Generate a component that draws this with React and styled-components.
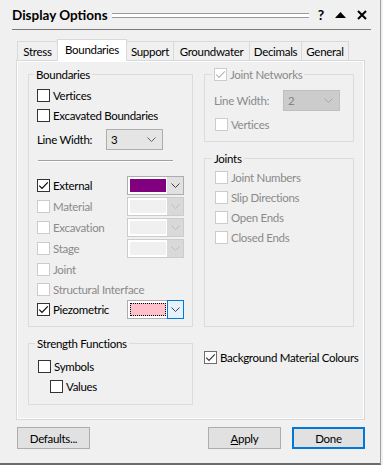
import React from "react";
import styled, { createGlobalStyle } from "styled-components";

const GlobalStyle = createGlobalStyle`
  html, body {
    margin: 0;
    padding: 0;
    background: #f0f0f0;
  }
  body {
    font-family: Lato, "Noto Sans", sans-serif;
    font-size: 11.5px;
    letter-spacing: -0.3px;
    color: #000;
  }
`;

const GREY_TEXT = "#8a8a8a";

function Chevron({ color = "#404040" }) {
  return (
    <svg width="9" height="5" viewBox="0 0 9 5">
      <path d="M0.5 0.5 L4.5 4.5 L8.5 0.5" fill="none" stroke={color} strokeWidth="1" />
    </svg>
  );
}

function CheckBox({ label, checked, disabled, soft }) {
  const stroke = disabled ? "#b5b5b5" : soft ? "#333" : "#000";
  return (
    <CheckLabel $disabled={disabled}>
      <Box $disabled={disabled} $soft={soft}>
        {checked && (
          <svg width="11" height="11" viewBox="0 0 11 11">
            <path d="M1.2 5.6 L4 8.4 L9.8 2.4" fill="none" stroke={stroke} strokeWidth="1.1" />
          </svg>
        )}
      </Box>
      {label}
    </CheckLabel>
  );
}

function ColorCombo({ color, disabled, focused }) {
  return (
    <Combo $disabled={disabled}>
      <Swatch $color={color} $focused={focused} />
      <DropButton $disabled={disabled} $focused={focused}>
        <Chevron color={disabled ? "#bdbdbd" : "#404040"} />
      </DropButton>
    </Combo>
  );
}

function LineWidth({ value, disabled }) {
  return (
    <FieldRow>
      <FieldLabel $disabled={disabled}>Line Width:</FieldLabel>
      <Select $disabled={disabled}>
        <span>{value}</span>
        <Chevron color={disabled ? "#a8a8a8" : "#606060"} />
      </Select>
    </FieldRow>
  );
}

const boundaryRows = [
  { label: "External", checked: true, color: "#800080" },
  { label: "Material", disabled: true, color: "#f0f0f0" },
  { label: "Excavation", disabled: true, color: "#f0f0f0" },
  { label: "Stage", disabled: true, color: "#f0f0f0" },
  { label: "Joint", disabled: true },
  { label: "Structural Interface", disabled: true },
  { label: "Piezometric", checked: true, color: "#ffc0cb", focused: true },
];

const tabs = [
  { name: "Stress", w: 41 },
  { name: "Boundaries", w: 70, active: true },
  { name: "Support", w: 48 },
  { name: "Groundwater", w: 77 },
  { name: "Decimals", w: 53 },
  { name: "General", w: 48 },
];

export default function App() {
  return (
    <>
      <GlobalStyle />
      <Dialog>
        <TitleBar>
          <Title>Display Options</Title>
          <Grip />
          <TitleIcons>
            <Help>?</Help>
            <svg width="11" height="6" viewBox="0 0 11 6">
              <path d="M0 6 L5.5 0 L11 6 Z" fill="#000" />
            </svg>
            <svg width="10" height="10" viewBox="0 0 10 10">
              <path d="M1 1 L9 9 M9 1 L1 9" stroke="#000" strokeWidth="2" />
            </svg>
          </TitleIcons>
        </TitleBar>

        <TabStrip>
          {tabs.map((t) => (
            <Tab key={t.name} $active={t.active} $w={t.w}>
              {t.name}
            </Tab>
          ))}
        </TabStrip>

        <Panel>
          <GroupBox $pad={8}>
            <Caption>Boundaries</Caption>
            <Stack $top={3}>
              <Row>
                <CheckBox label="Vertices" />
              </Row>
              <Row>
                <CheckBox label="Excavated Boundaries" />
              </Row>
            </Stack>
            <Spaced $top={4}>
              <LineWidth value="3" />
            </Spaced>
            <Separator />
            <Stack $top={13}>
              {boundaryRows.map((r) => (
                <Row key={r.label} $h={r.color ? 21 : 20}>
                  <CheckBox label={r.label} checked={r.checked} disabled={r.disabled} />
                  {r.color && (
                    <ColorCombo color={r.color} disabled={r.disabled} focused={r.focused} />
                  )}
                </Row>
              ))}
            </Stack>
          </GroupBox>

          <Column>
            <GroupBox $pad={10} $bottom={7}>
              <Caption>
                <CheckBox label="Joint Networks" checked disabled />
              </Caption>
              <Spaced $top={8} $shift={-1}>
                <LineWidth value="2" disabled />
              </Spaced>
              <Stack $top={3}>
                <Row>
                  <CheckBox label="Vertices" disabled />
                </Row>
              </Stack>
            </GroupBox>

            <GroupBox $pad={10} $grow>
              <Caption>Joints</Caption>
              <Stack $top={1}>
                <Row>
                  <CheckBox label="Joint Numbers" disabled />
                </Row>
                <Row>
                  <CheckBox label="Slip Directions" disabled />
                </Row>
                <Row>
                  <CheckBox label="Open Ends" disabled />
                </Row>
                <Row>
                  <CheckBox label="Closed Ends" disabled />
                </Row>
              </Stack>
            </GroupBox>
          </Column>

          <GroupBox $pad={9} $bottom={8}>
            <Caption>Strength Functions</Caption>
            <Stack $top={5}>
              <Row>
                <CheckBox label="Symbols" />
              </Row>
              <Row $indent={12}>
                <CheckBox label="Values" />
              </Row>
            </Stack>
          </GroupBox>

          <Stack $top={4}>
            <Row>
              <CheckBox label="Background Material Colours" checked soft />
            </Row>
          </Stack>
        </Panel>

        <ButtonBar>
          <Button>Defaults...</Button>
          <Spacer />
          <Button>
            <u>A</u>pply
          </Button>
          <Button $default>Done</Button>
        </ButtonBar>
      </Dialog>
    </>
  );
}

const Dialog = styled.div`
  box-sizing: border-box;
  width: 381px;
  height: 465px;
  padding: 0 15px 0 16px;
  border-right: 1px solid #a0a0a0;
  border-bottom: 2px solid #6b6b6b;
  background: #f0f0f0;
`;

const TitleBar = styled.div`
  display: flex;
  align-items: center;
  height: 16px;
  margin: 0 -6px 0 -4px;
  padding: 7px 0 6px;
  border-bottom: 1px solid #7a7a7a;
`;

const Title = styled.div`
  font-size: 13.5px;
  font-weight: 700;
  letter-spacing: 0;
  line-height: 16px;
  white-space: nowrap;
`;

const Grip = styled.div`
  flex: 1;
  height: 3px;
  margin: 0 9px 0 4px;
  border-top: 1px solid #9a9a9a;
  border-bottom: 1px solid #9a9a9a;
  background: #fff;
`;

const TitleIcons = styled.div`
  display: flex;
  align-items: center;
  gap: 11px;
  padding-right: 4px;
`;

const Help = styled.span`
  font-size: 14px;
  font-weight: 700;
  line-height: 16px;
`;

const TabStrip = styled.div`
  display: flex;
  align-items: flex-end;
  height: 21px;
  margin: 9px 0 0 2px;
  position: relative;
  z-index: 1;
`;

const Tab = styled.div`
  box-sizing: border-box;
  width: ${(p) => p.$w}px;
  height: ${(p) => (p.$active ? 22 : 19)}px;
  margin-left: -1px;
  margin-bottom: ${(p) => (p.$active ? -1 : 0)}px;
  display: flex;
  align-items: center;
  justify-content: center;
  padding-bottom: ${(p) => (p.$active ? 2 : 0)}px;
  border: 1px solid #d9d9d9;
  border-bottom: none;
  background: ${(p) => (p.$active ? "#fff" : "#f0f0f0")};
  white-space: nowrap;
`;

const Panel = styled.div`
  box-sizing: border-box;
  width: 349px;
  height: 360px;
  display: grid;
  grid-template-columns: 165px 150px;
  grid-template-rows: 253px 62px;
  column-gap: 11px;
  row-gap: 16px;
  padding: 13px 10px 14px 11px;
  border: 1px solid #d9d9d9;
  box-shadow: inset 0 0 0 1px #fff;
`;

const Column = styled.div`
  display: flex;
  flex-direction: column;
  gap: 16px;
`;

const GroupBox = styled.div`
  box-sizing: border-box;
  border: 1px solid #dcdcdc;
  padding: 0 8px ${(p) => p.$bottom ?? 6}px ${(p) => p.$pad}px;
  flex: ${(p) => (p.$grow ? 1 : "none")};
`;

const Caption = styled.div`
  display: flex;
  align-items: center;
  width: fit-content;
  height: 15px;
  line-height: 15px;
  margin: -8px 0 0 -3px;
  padding: 0 2px;
  background: #f0f0f0;
`;

const Stack = styled.div`
  display: flex;
  flex-direction: column;
  margin-top: ${(p) => p.$top}px;
`;

const Spaced = styled.div`
  margin-top: ${(p) => p.$top}px;
  margin-left: ${(p) => p.$shift ?? 0}px;
`;

const Row = styled.div`
  display: flex;
  align-items: center;
  justify-content: space-between;
  height: ${(p) => p.$h ?? 20}px;
  padding-left: ${(p) => p.$indent ?? 0}px;
`;

const CheckLabel = styled.label`
  display: flex;
  align-items: center;
  gap: 3px;
  white-space: nowrap;
  color: ${(p) => (p.$disabled ? GREY_TEXT : "#000")};
`;

const Box = styled.span`
  box-sizing: border-box;
  width: 13px;
  height: 13px;
  display: flex;
  align-items: center;
  justify-content: center;
  border: 1px solid ${(p) => (p.$disabled ? "#cccccc" : p.$soft ? "#6e6e6e" : "#333")};
  background: #fff;
`;

const Combo = styled.div`
  box-sizing: border-box;
  width: 57px;
  height: 19px;
  display: flex;
  border: 1px solid ${(p) => (p.$disabled ? "#cccccc" : "#adadad")};
  background: #fff;
`;

const Swatch = styled.div`
  box-sizing: border-box;
  flex: 1;
  margin: 2px 1px 2px 2px;
  background: ${(p) => p.$color};
  border: ${(p) => (p.$focused ? "1px dotted #000" : "none")};
`;

const DropButton = styled.div`
  box-sizing: border-box;
  display: flex;
  align-items: center;
  justify-content: center;
  background: ${(p) => (p.$focused ? "#e5f1fb" : p.$disabled ? "#d9d9d9" : "#e1e1e1")};
  border: 1px solid ${(p) => (p.$focused ? "#0078d7" : "transparent")};
  margin: ${(p) => (p.$focused ? "-1px -1px -1px 0" : "0")};
  width: ${(p) => (p.$focused ? 17 : 16)}px;
`;

const FieldRow = styled.div`
  display: flex;
  align-items: center;
  height: 21px;
`;

const FieldLabel = styled.span`
  width: 69px;
  color: ${(p) => (p.$disabled ? GREY_TEXT : "#000")};
`;

const Select = styled.div`
  box-sizing: border-box;
  width: 57px;
  height: 21px;
  display: flex;
  align-items: center;
  justify-content: space-between;
  padding: 0 6px 0 4px;
  border: 1px solid ${(p) => (p.$disabled ? "#bfbfbf" : "#adadad")};
  background: ${(p) => (p.$disabled ? "#cccccc" : "#e5e5e5")};
  color: ${(p) => (p.$disabled ? "#838383" : "#000")};
`;

const Separator = styled.div`
  height: 0;
  margin: 10px 11px 0 1px;
  border-top: 1px solid #a0a0a0;
  border-bottom: 1px solid #fff;
`;

const ButtonBar = styled.div`
  display: flex;
  align-items: center;
  gap: 11px;
  margin-top: 7px;
  padding-left: 1px;
`;

const Spacer = styled.div`
  flex: 1;
`;

const Button = styled.button`
  box-sizing: border-box;
  width: 73px;
  height: 22px;
  padding: 0;
  font: inherit;
  letter-spacing: inherit;
  color: #000;
  background: #e1e1e1;
  border: ${(p) => (p.$default ? "2px solid #0078d7" : "1px solid #adadad")};
`;
